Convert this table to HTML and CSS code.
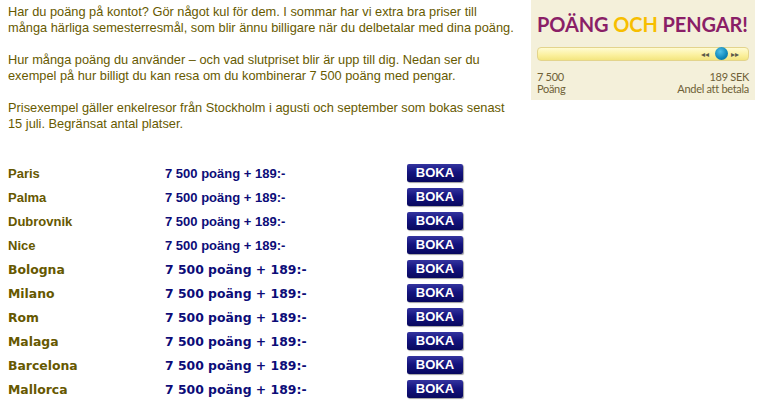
FILE: index.html
```html
<!DOCTYPE html>
<html lang="sv">
<head>
  <meta charset="UTF-8" />
  <title>Poäng och pengar</title>
  <link rel="stylesheet" href="styles.css">
</head>
<body>
  <div class="top">
    <div class="intro">
      <p>Har du poäng på kontot? Gör något kul för dem. I sommar har vi extra bra priser till<br>många härliga semesterresmål, som blir ännu billigare när du delbetalar med dina poäng.</p>
      <p>Hur många poäng du använder – och vad slutpriset blir är upp till dig. Nedan ser du<br>exempel på hur billigt du kan resa om du kombinerar 7 500 poäng med pengar.</p>
      <p>Prisexempel gäller enkelresor från Stockholm i agusti och september som bokas senast<br>15 juli. Begränsat antal platser.</p>
    </div>

    <div class="promo">
      <div class="promo-title">POÄNG <span class="och">OCH</span> PENGAR!</div>
      <div class="slider">
        <span class="arrows left">&#9666;&#9666;</span>
        <span class="knob"></span>
        <span class="arrows right">&#9656;&#9656;</span>
      </div>
      <div class="promo-labels">
        <div>7 500<br>Poäng</div>
        <div class="right">189 SEK<br>Andel att betala</div>
      </div>
    </div>
  </div>

  <div class="trips">
    <div class="trip">
      <span class="city">Paris</span>
      <span class="price">7 500 poäng + 189:-</span>
      <a class="boka" href="#">BOKA</a>
    </div>
    <div class="trip">
      <span class="city">Palma</span>
      <span class="price">7 500 poäng + 189:-</span>
      <a class="boka" href="#">BOKA</a>
    </div>
    <div class="trip">
      <span class="city">Dubrovnik</span>
      <span class="price">7 500 poäng + 189:-</span>
      <a class="boka" href="#">BOKA</a>
    </div>
    <div class="trip">
      <span class="city">Nice</span>
      <span class="price">7 500 poäng + 189:-</span>
      <a class="boka" href="#">BOKA</a>
    </div>
    <div class="trip wide">
      <span class="city">Bologna</span>
      <span class="price">7 500 poäng + 189:-</span>
      <a class="boka" href="#">BOKA</a>
    </div>
    <div class="trip wide">
      <span class="city">Milano</span>
      <span class="price">7 500 poäng + 189:-</span>
      <a class="boka" href="#">BOKA</a>
    </div>
    <div class="trip wide">
      <span class="city">Rom</span>
      <span class="price">7 500 poäng + 189:-</span>
      <a class="boka" href="#">BOKA</a>
    </div>
    <div class="trip wide">
      <span class="city">Malaga</span>
      <span class="price">7 500 poäng + 189:-</span>
      <a class="boka" href="#">BOKA</a>
    </div>
    <div class="trip wide">
      <span class="city">Barcelona</span>
      <span class="price">7 500 poäng + 189:-</span>
      <a class="boka" href="#">BOKA</a>
    </div>
    <div class="trip wide">
      <span class="city">Mallorca</span>
      <span class="price">7 500 poäng + 189:-</span>
      <a class="boka" href="#">BOKA</a>
    </div>
  </div>
</body>
</html>
```

FILE: styles.css
```css
body {
  margin: 0;
  background-color: #ffffff;
  font-family: 'Liberation Sans', Arial, sans-serif;
  font-size: 12.8px;
  color: #675a00;
}
.top {
  display: flex;
  align-items: flex-start;
}
.intro {
  width: 515px;
  padding: 4px 0 0 8px;
  white-space: nowrap;
}
.intro p {
  margin: 0 0 16px 0;
  line-height: 16px;
}
.promo {
  margin-left: 8px;
  width: 212px;
  height: 100px;
  padding: 0 6px;
  background-color: #f4f0da;
  font-family: Lato, 'Open Sans', sans-serif;
  box-sizing: content-box;
}
.promo-title {
  padding-top: 14px;
  font-size: 20px;
  line-height: 20px;
  font-weight: 700;
  color: #8a1f67;
  letter-spacing: -0.1px;
  white-space: nowrap;
}
.och {
  color: #f7be00;
}
.slider {
  position: relative;
  margin-top: 13px;
  height: 12px;
  border: 1px solid #e3d48c;
  border-radius: 4px;
  background: linear-gradient(#fffbd2, #fbf09d 60%, #f3e57f);
}
.knob {
  position: absolute;
  left: 177px;
  top: -1px;
  width: 13px;
  height: 13px;
  border-radius: 50%;
  background: radial-gradient(circle at 40% 35%, #4fc0e8, #0f86b8 60%, #0a6a95);
}
.arrows {
  position: absolute;
  top: 0;
  font-size: 8px;
  line-height: 12px;
  color: #5a5a4a;
}
.arrows.left {
  left: 163px;
}
.arrows.right {
  left: 193px;
}
.promo-labels {
  display: flex;
  justify-content: space-between;
  margin-top: 10px;
  font-size: 11px;
  line-height: 12px;
  letter-spacing: -0.3px;
  color: #6f6137;
}
.promo-labels .right {
  text-align: right;
}
.trips {
  margin-top: 13px;
  padding-left: 8px;
}
.trip {
  display: grid;
  grid-template-columns: 157px 242px 56px;
  align-items: center;
  height: 24px;
}
.city {
  font-weight: bold;
  font-size: 13px;
  color: #665800;
}
.price {
  font-weight: bold;
  font-size: 13px;
  color: #0c0c78;
}
.wide .city,
.wide .price {
  font-family: 'DejaVu Sans', Verdana, sans-serif;
  font-size: 12.4px;
}
.boka {
  display: block;
  height: 18px;
  line-height: 18px;
  text-align: center;
  text-decoration: none;
  font-family: 'Liberation Sans', Arial, sans-serif;
  font-weight: bold;
  font-size: 13px;
  color: #ffffff;
  background: linear-gradient(#34349f, #14147f 45%, #08085e);
  border-radius: 2px;
  box-shadow: 1px 1px 1px #a0a0a0;
}
```
